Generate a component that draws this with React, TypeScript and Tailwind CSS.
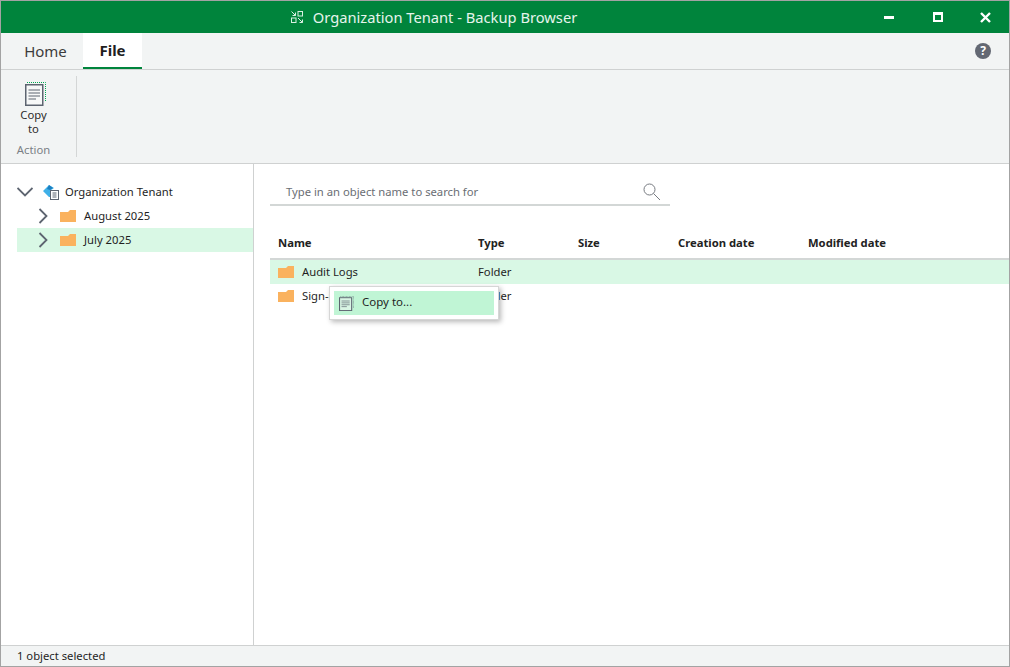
const font = "font-['Noto_Sans','Open_Sans','Liberation_Sans',sans-serif]";

// Orange folder used in the tree and in the file list
function Folder() {
    return (
        <svg width="16" height="12" viewBox="0 0 16 12" className="shrink-0">
            <path d="M0 2 H8 L10 0 H16 V12 H0 Z" fill="#fab25e" />
        </svg>
    );
}

function CopyIcon({ size }: { size: 'large' | 'small' }) {
    const large = size === 'large';
    return (
        <svg width={large ? 21 : 15} height={large ? 24 : 15} viewBox="0 0 21 24" className="shrink-0" preserveAspectRatio="none">
            <path d="M2 0.5 H20.5 V19" fill="none" stroke={large ? '#00a651' : '#5d6470'} strokeWidth="1" strokeDasharray="1 1" />
            <rect x="0.75" y="2.75" width="17" height="20.5" fill={large ? '#f7f8f8' : '#d9f5e4'} stroke="#5d6470" strokeWidth="1.5" />
            <path d="M3.5 8 H15 M3.5 11 H15 M3.5 14 H15 M3.5 17 H11" stroke="#5d6470" strokeWidth="1" fill="none" />
        </svg>
    );
}

function TitleIcon() {
    return (
        <svg width="12" height="12" viewBox="0 0 12 12" fill="none" stroke="#d9efe2" strokeWidth="1" className="shrink-0">
            <path d="M0.5 0.5 L4.5 4.5 M4.5 1.5 V4.5 H1.5" />
            <rect x="7" y="0.5" width="4.5" height="4.5" />
            <rect x="0.5" y="7" width="4.5" height="4.5" />
            <path d="M7 7 L11.5 11.5 M11.5 8.5 V11.5 H8.5" />
        </svg>
    );
}

function WindowButtons() {
    return (
        <div className="absolute right-0 top-0 h-8 flex items-center">
            <div className="w-12 flex justify-center pr-[4px]">
                <div className="w-[10px] h-[3px] bg-white" />
            </div>
            <div className="w-[46px] flex justify-center pr-[1px]">
                <div className="w-[10px] h-[10px] border-2 border-t-[3px] border-white" />
            </div>
            <div className="w-[48px] flex justify-center">
                <svg width="11" height="11" viewBox="0 0 11 11" stroke="#fff" strokeWidth="2.4">
                    <path d="M1 1 L10 10 M10 1 L1 10" />
                </svg>
            </div>
        </div>
    );
}

function ArrowRight() {
    return (
        <svg width="10" height="16" viewBox="0 0 10 16" fill="none" stroke="#5d6470" strokeWidth="1.8" className="shrink-0">
            <path d="M1.5 1 L8.5 8 L1.5 15" />
        </svg>
    );
}

function ArrowDown() {
    return (
        <svg width="16" height="10" viewBox="0 0 16 10" fill="none" stroke="#5d6470" strokeWidth="1.8" className="shrink-0">
            <path d="M0.5 1 L8 8.5 L15.5 1" />
        </svg>
    );
}

function TreeRow({ label, selected }: { label: string; selected?: boolean }) {
    return (
        <div className={`h-6 flex items-center pl-[21px] ${selected ? 'bg-[#d9f8e5]' : ''}`}>
            <ArrowRight />
            <div className="ml-[12px] mr-2">
                <Folder />
            </div>
            <span>{label}</span>
        </div>
    );
}

export default function App() {
    const columns = [
        { name: 'Name', width: 'w-[200px]' },
        { name: 'Type', width: 'w-[100px]' },
        { name: 'Size', width: 'w-[100px]' },
        { name: 'Creation date', width: 'w-[130px]' },
        { name: 'Modified date', width: 'w-[130px]' },
    ];

    return (
        <div className={`${font} w-[1010px] h-[667px] flex flex-col bg-white border border-[#a3a3a3] text-[11.25px] text-[#1f1f1f] overflow-hidden`}>
            {/* Title bar */}
            <div className="relative h-8 shrink-0 bg-[#00843c] flex items-center justify-center pr-[142px] text-[#e6f4ec] text-[14.7px]">
                <div className="flex items-center gap-[10px]">
                    <TitleIcon />
                    <span>Organization Tenant - Backup Browser</span>
                </div>
                <WindowButtons />
            </div>

            {/* Tabs */}
            <div className="h-[37px] shrink-0 bg-[#f2f4f4] border-b border-[#cfd1d1] flex items-stretch relative">
                <div className="w-[82px] flex items-center justify-center pl-[7px] text-[15px] text-[#3c3c3c]">Home</div>
                <div className="w-[59px] h-[36px] bg-white border-b-2 border-[#00843c] flex items-center justify-center text-[15px] font-bold">File</div>
                <div className="absolute right-[18px] top-[10px] w-4 h-4 rounded-full bg-[#636873] flex items-center justify-center text-white text-[12px] font-bold leading-none">?</div>
            </div>

            {/* Ribbon */}
            <div className="h-[94px] shrink-0 bg-[#f2f4f4] border-b border-[#cfd1d1] flex">
                <div className="w-[76px] h-[81px] mt-[6px] pr-[10px] border-r border-[#d4d6d6] flex flex-col items-center">
                    <div className="mt-[6px] ml-[3px]">
                        <CopyIcon size="large" />
                    </div>
                    <div className="text-center leading-[14px] mt-[2px] text-[#2b2b2b]">Copy<br />to</div>
                    <div className="mt-[6px] text-[#7b7f85]">Action</div>
                </div>
            </div>

            {/* Body */}
            <div className="flex-1 min-h-0 flex">
                <div className="w-[253px] shrink-0 border-r border-[#cfd1d1] pt-4 pl-4">
                    <div className="h-6 flex items-center">
                        <ArrowDown />
                        <svg width="17" height="16" viewBox="0 0 17 16" className="ml-[9px] mr-[6px] shrink-0">
                            <path d="M7 1 L1 7 L7 13 L9 13 L9 6 L12 4 Z" fill="#3fb0e8" />
                            <path d="M7 1 L11 4 L8 6 L5 5 Z" fill="#1d7fc0" />
                            <rect x="8.5" y="6.5" width="8" height="9" fill="#fff" stroke="#5d6470" />
                            <path d="M10.5 9 H14.5 M10.5 11 H14.5 M10.5 13 H14.5" stroke="#5d6470" />
                        </svg>
                        <span>Organization Tenant</span>
                    </div>
                    <TreeRow label="August 2025" />
                    <TreeRow label="July 2025" selected />
                </div>

                <div className="flex-1 min-w-0 pt-4 pl-4 relative">
                    <div className="w-[400px] h-[26px] border-b-2 border-[#d3d7d6] flex items-center justify-between pl-4 pr-[9px] text-[#6a6e74]">
                        <span>Type in an object name to search for</span>
                        <svg width="18" height="18" viewBox="0 0 18 18" fill="none" stroke="#777b81" strokeWidth="1" className="shrink-0 -mt-[1px]">
                            <circle cx="6.5" cy="6.5" r="5.5" />
                            <path d="M10.5 10.5 L17 17" />
                        </svg>
                    </div>

                    <div className="mt-[22px] h-[32px] border-b-2 border-[#d3d7d6] flex items-center pl-2 font-bold text-[#222]">
                        {columns.map((c) => (
                            <div key={c.name} className={c.width}>{c.name}</div>
                        ))}
                    </div>
                    <div className="h-6 bg-[#d9f8e5] flex items-center pl-2">
                        <div className="w-[200px] flex items-center gap-2"><Folder />Audit Logs</div>
                        <div>Folder</div>
                    </div>
                    <div className="h-6 flex items-center pl-2">
                        <div className="w-[200px] flex items-center gap-2"><Folder />Sign-in Logs</div>
                        <div>Folder</div>
                    </div>

                    {/* Context menu */}
                    <div className="absolute left-[75px] top-[122px] w-[170px] h-[34px] bg-white border border-[#d6d6d6] shadow-[2px_2px_5px_rgba(0,0,0,0.28)] p-[4px]">
                        <div className="h-6 bg-[#c0f5d5] flex items-center pl-[5px] gap-[8px]">
                            <CopyIcon size="small" />
                            <span className="text-[11.5px] -mt-[2px]">Copy to...</span>
                        </div>
                    </div>
                </div>
            </div>

            {/* Status bar */}
            <div className="h-[21px] shrink-0 bg-[#f2f4f4] border-t border-[#cfd1d1] flex items-center pl-4">1 object selected</div>
        </div>
    );
}
